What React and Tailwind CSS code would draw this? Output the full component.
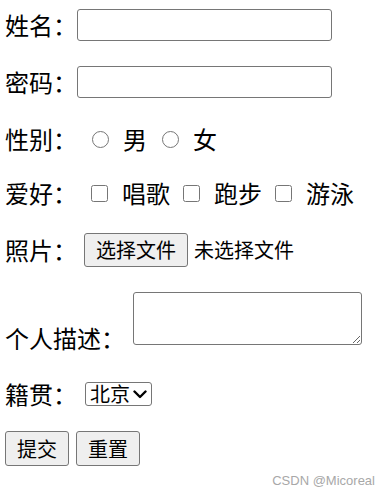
import React from "react";

const cjk = { fontFamily: '"Noto Sans CJK SC", "Liberation Sans", sans-serif' };

const Label = ({ children }) => (
  <span className="text-[24px] leading-[24px] text-black whitespace-nowrap">{children}</span>
);

const Radio = ({ className = "" }) => (
  <input type="radio" name="sex" className={`w-[17px] h-[17px] m-0 ${className}`} />
);

const Check = ({ className = "" }) => (
  <input type="checkbox" className={`w-[17px] h-[17px] m-0 ${className}`} />
);

const GrayButton = ({ children, className = "" }) => (
  <button
    type="button"
    className={`flex items-center justify-center bg-[#efefef] border border-[#767676] rounded-[3px] text-[20px] leading-none text-black ${className}`}
  >
    {children}
  </button>
);

export default function App() {
  return (
    <form className="w-[390px] h-[496px] bg-white pl-[5px] flex flex-col overflow-hidden" style={cjk}>
      {/* 姓名 */}
      <div className="h-[50px] flex items-center">
        <Label>姓名：</Label>
        <input
          type="text"
          className="w-[255px] h-[32px] border border-[#767676] rounded-[3px] bg-white"
        />
      </div>

      {/* 密码 */}
      <div className="h-[64px] flex items-center">
        <Label>密码：</Label>
        <input
          type="password"
          className="w-[255px] h-[32px] border border-[#767676] rounded-[3px] bg-white"
        />
      </div>

      {/* 性别 */}
      <div className="h-[50px] flex items-center">
        <Label>性别：</Label>
        <Radio className="ml-[15px]" />
        <span className="ml-[14px] text-[24px] leading-[24px]">男</span>
        <Radio className="ml-[15px]" />
        <span className="ml-[14px] text-[24px] leading-[24px]">女</span>
      </div>

      {/* 爱好 */}
      <div className="h-[58px] flex items-center">
        <Label>爱好：</Label>
        <Check className="ml-[14px]" />
        <span className="ml-[14px] text-[24px] leading-[24px]">唱歌</span>
        <Check className="ml-[13px]" />
        <span className="ml-[14px] text-[24px] leading-[24px]">跑步</span>
        <Check className="ml-[13px]" />
        <span className="ml-[14px] text-[24px] leading-[24px]">游泳</span>
      </div>

      {/* 照片 */}
      <div className="h-[56px] flex items-center">
        <Label>照片：</Label>
        <GrayButton className="ml-[7px] w-[104px] h-[34px]">选择文件</GrayButton>
        <span className="ml-[6px] text-[20px] leading-[20px]">未选择文件</span>
      </div>

      {/* 个人描述 */}
      <div className="mt-[14px] flex items-end">
        <Label>个人描述：</Label>
        <textarea className="ml-[8px] mb-[5px] w-[229px] h-[53px] border border-[#767676] rounded-[3px] bg-white" />
      </div>

      {/* 籍贯 */}
      <div className="mt-[20px] h-[48px] flex items-center">
        <Label>籍贯：</Label>
        <div className="ml-[8px] w-[67px] h-[24px] border border-[#767676] rounded-[3px] flex items-center pl-[4px]">
          <span className="text-[20px] leading-[20px]">北京</span>
          <svg className="ml-[3px]" width="14" height="9" viewBox="0 0 14 9">
            <polyline
              points="1.5,1.5 7,7 12.5,1.5"
              fill="none"
              stroke="#000"
              strokeWidth="2.4"
              strokeLinecap="round"
              strokeLinejoin="round"
            />
          </svg>
        </div>
      </div>

      {/* 按钮 */}
      <div className="mt-[13px] flex gap-[7px]">
        <GrayButton className="w-[64px] h-[35px]">提交</GrayButton>
        <GrayButton className="w-[64px] h-[35px]">重置</GrayButton>
      </div>

      <div className="mt-[7px] h-[16px] flex justify-end pr-[15px]">
        <span
          className="text-[13px] leading-[16px] text-[#a8a8a8]"
          style={{ fontFamily: '"Liberation Sans", Arial, sans-serif' }}
        >
          CSDN @Micoreal
        </span>
      </div>
    </form>
  );
}
